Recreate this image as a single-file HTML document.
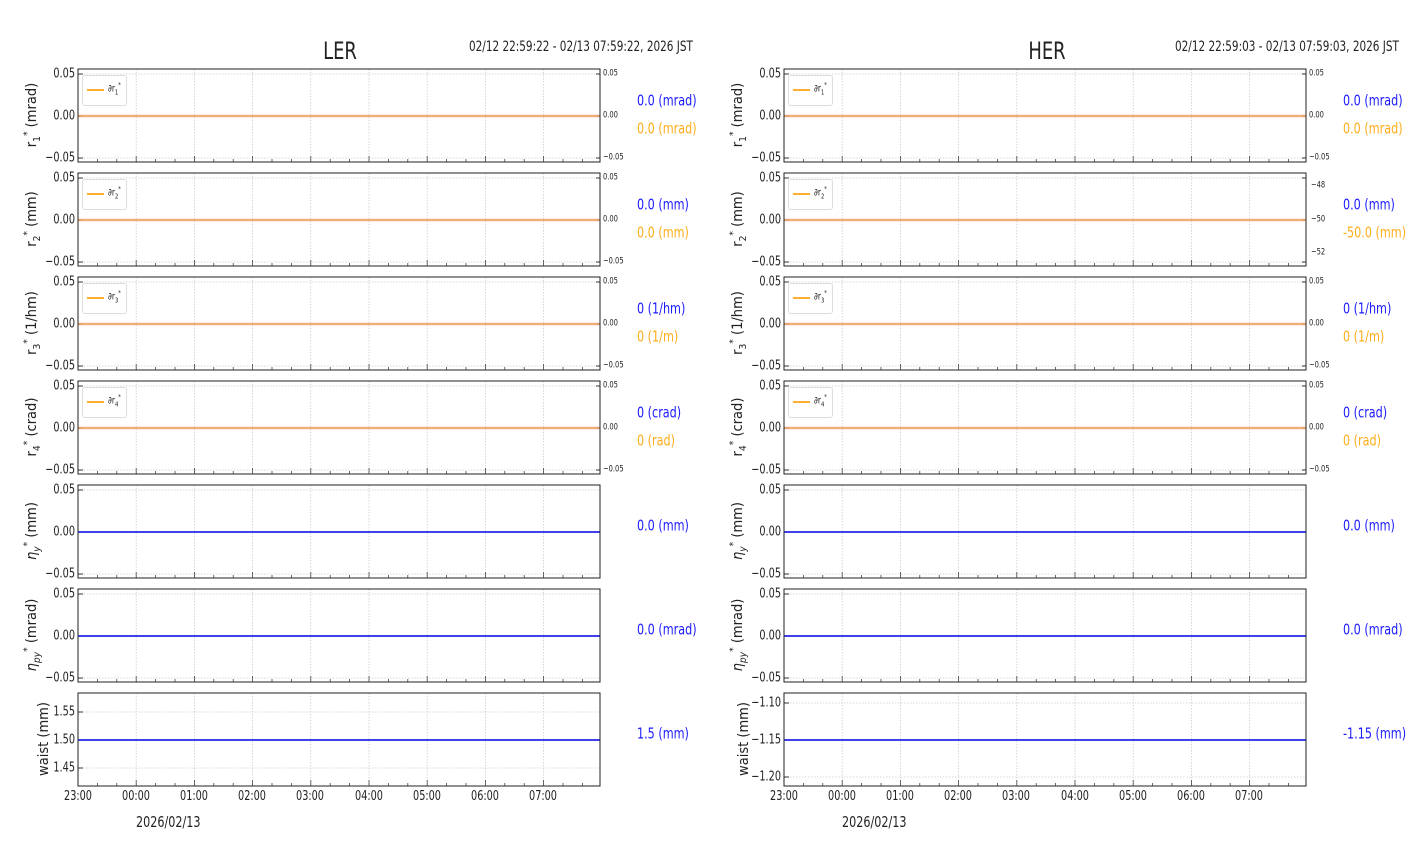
<!DOCTYPE html>
<html><head><meta charset="utf-8"><style>
body{margin:0;background:#fff;width:1412px;height:864px;position:relative;overflow:hidden;font-family:"DejaVu Sans Condensed","DejaVu Sans","Liberation Sans",sans-serif;color:#222}
.t{position:absolute;white-space:nowrap;line-height:1}
.yl{font-size:13px;transform:translate(-100%,-50%) scaleX(.83);transform-origin:100% 50%}
.xl{font-size:13px;transform:translate(-50%,0) scaleX(.83);transform-origin:50% 50%}
.rs{font-size:9px;transform:translate(0,-50%) scaleX(.83);transform-origin:0 50%}
.lab{font-size:14.5px;transform:translate(-50%,-50%) rotate(-90deg)}
.v{font-size:15px;transform:translate(0,-50%) scaleX(.83);transform-origin:0 50%}
.sc{transform:scaleX(.83);transform-origin:0 50%}
.b{color:#1a1aff}.o{color:#ffad1a}
.leg{position:absolute;width:43px;height:29px;border:1px solid #ddd;border-radius:3px;background:#fff}
.leg i{position:absolute;left:4px;top:13px;width:17px;height:2px;background:#ffb030}
.leg span{position:absolute;left:25px;top:5px;font-size:10px;transform:scaleX(.83);transform-origin:0 50%}
sup,sub{font-size:70%}
</style></head><body>
<svg id="g" width="1412" height="864" style="position:absolute;left:0;top:0"></svg>

<div class="t" style="left:340px;top:39px;font-size:24px;transform:translateX(-50%) scaleX(.83)">LER</div>
<div class="t sc" style="left:469px;top:40px;font-size:14px">02/12 22:59:22 - 02/13 07:59:22, 2026 JST</div>
<div class="t" style="left:1047px;top:39px;font-size:24px;transform:translateX(-50%) scaleX(.83)">HER</div>
<div class="t sc" style="left:1175px;top:40px;font-size:14px">02/12 22:59:03 - 02/13 07:59:03, 2026 JST</div>

<div class="t lab" style="left:33px;top:115px">r<sub>1</sub><sup>*</sup> (mrad)</div>
<div class="t lab" style="left:33px;top:219px">r<sub>2</sub><sup>*</sup> (mm)</div>
<div class="t lab" style="left:33px;top:323px">r<sub>3</sub><sup>*</sup> (1/hm)</div>
<div class="t lab" style="left:33px;top:427px">r<sub>4</sub><sup>*</sup> (crad)</div>
<div class="t lab" style="left:33px;top:531px"><i>η</i><sub><i>y</i></sub><sup>*</sup> (mm)</div>
<div class="t lab" style="left:33px;top:635px"><i>η</i><sub><i>py</i></sub><sup>*</sup> (mrad)</div>
<div class="t lab" style="left:44px;top:739px">waist (mm)</div>
<div class="t lab" style="left:739px;top:115px">r<sub>1</sub><sup>*</sup> (mrad)</div>
<div class="t lab" style="left:739px;top:219px">r<sub>2</sub><sup>*</sup> (mm)</div>
<div class="t lab" style="left:739px;top:323px">r<sub>3</sub><sup>*</sup> (1/hm)</div>
<div class="t lab" style="left:739px;top:427px">r<sub>4</sub><sup>*</sup> (crad)</div>
<div class="t lab" style="left:739px;top:531px"><i>η</i><sub><i>y</i></sub><sup>*</sup> (mm)</div>
<div class="t lab" style="left:739px;top:635px"><i>η</i><sub><i>py</i></sub><sup>*</sup> (mrad)</div>
<div class="t lab" style="left:744px;top:739px">waist (mm)</div>

<div class="t yl" style="left:75px;top:74px">0.05</div><div class="t yl" style="left:75px;top:116px">0.00</div><div class="t yl" style="left:75px;top:158px">−0.05</div>
<div class="t yl" style="left:75px;top:178px">0.05</div><div class="t yl" style="left:75px;top:220px">0.00</div><div class="t yl" style="left:75px;top:262px">−0.05</div>
<div class="t yl" style="left:75px;top:282px">0.05</div><div class="t yl" style="left:75px;top:324px">0.00</div><div class="t yl" style="left:75px;top:366px">−0.05</div>
<div class="t yl" style="left:75px;top:386px">0.05</div><div class="t yl" style="left:75px;top:428px">0.00</div><div class="t yl" style="left:75px;top:470px">−0.05</div>
<div class="t yl" style="left:75px;top:490px">0.05</div><div class="t yl" style="left:75px;top:532px">0.00</div><div class="t yl" style="left:75px;top:574px">−0.05</div>
<div class="t yl" style="left:75px;top:594px">0.05</div><div class="t yl" style="left:75px;top:636px">0.00</div><div class="t yl" style="left:75px;top:678px">−0.05</div>
<div class="t yl" style="left:75px;top:712px">1.55</div><div class="t yl" style="left:75px;top:740px">1.50</div><div class="t yl" style="left:75px;top:768px">1.45</div>
<div class="t yl" style="left:781px;top:74px">0.05</div><div class="t yl" style="left:781px;top:116px">0.00</div><div class="t yl" style="left:781px;top:158px">−0.05</div>
<div class="t yl" style="left:781px;top:178px">0.05</div><div class="t yl" style="left:781px;top:220px">0.00</div><div class="t yl" style="left:781px;top:262px">−0.05</div>
<div class="t yl" style="left:781px;top:282px">0.05</div><div class="t yl" style="left:781px;top:324px">0.00</div><div class="t yl" style="left:781px;top:366px">−0.05</div>
<div class="t yl" style="left:781px;top:386px">0.05</div><div class="t yl" style="left:781px;top:428px">0.00</div><div class="t yl" style="left:781px;top:470px">−0.05</div>
<div class="t yl" style="left:781px;top:490px">0.05</div><div class="t yl" style="left:781px;top:532px">0.00</div><div class="t yl" style="left:781px;top:574px">−0.05</div>
<div class="t yl" style="left:781px;top:594px">0.05</div><div class="t yl" style="left:781px;top:636px">0.00</div><div class="t yl" style="left:781px;top:678px">−0.05</div>
<div class="t yl" style="left:781px;top:703px">−1.10</div><div class="t yl" style="left:781px;top:740px">−1.15</div><div class="t yl" style="left:781px;top:777px">−1.20</div>

<div class="t rs" style="left:603px;top:74px">0.05</div><div class="t rs" style="left:603px;top:116px">0.00</div><div class="t rs" style="left:603px;top:158px">−0.05</div>
<div class="t rs" style="left:603px;top:178px">0.05</div><div class="t rs" style="left:603px;top:220px">0.00</div><div class="t rs" style="left:603px;top:262px">−0.05</div>
<div class="t rs" style="left:603px;top:282px">0.05</div><div class="t rs" style="left:603px;top:324px">0.00</div><div class="t rs" style="left:603px;top:366px">−0.05</div>
<div class="t rs" style="left:603px;top:386px">0.05</div><div class="t rs" style="left:603px;top:428px">0.00</div><div class="t rs" style="left:603px;top:470px">−0.05</div>
<div class="t rs" style="left:1309px;top:74px">0.05</div><div class="t rs" style="left:1309px;top:116px">0.00</div><div class="t rs" style="left:1309px;top:158px">−0.05</div>
<div class="t rs" style="left:1311px;top:186px">−48</div><div class="t rs" style="left:1311px;top:220px">−50</div><div class="t rs" style="left:1311px;top:253px">−52</div>
<div class="t rs" style="left:1309px;top:282px">0.05</div><div class="t rs" style="left:1309px;top:324px">0.00</div><div class="t rs" style="left:1309px;top:366px">−0.05</div>
<div class="t rs" style="left:1309px;top:386px">0.05</div><div class="t rs" style="left:1309px;top:428px">0.00</div><div class="t rs" style="left:1309px;top:470px">−0.05</div>

<div class="leg" style="left:82px;top:75px"><i></i><span>∂r<sub>1</sub><sup>*</sup></span></div>
<div class="leg" style="left:82px;top:179px"><i></i><span>∂r<sub>2</sub><sup>*</sup></span></div>
<div class="leg" style="left:82px;top:283px"><i></i><span>∂r<sub>3</sub><sup>*</sup></span></div>
<div class="leg" style="left:82px;top:387px"><i></i><span>∂r<sub>4</sub><sup>*</sup></span></div>
<div class="leg" style="left:788px;top:75px"><i></i><span>∂r<sub>1</sub><sup>*</sup></span></div>
<div class="leg" style="left:788px;top:179px"><i></i><span>∂r<sub>2</sub><sup>*</sup></span></div>
<div class="leg" style="left:788px;top:283px"><i></i><span>∂r<sub>3</sub><sup>*</sup></span></div>
<div class="leg" style="left:788px;top:387px"><i></i><span>∂r<sub>4</sub><sup>*</sup></span></div>

<div class="t v b" style="left:637px;top:101px">0.0 (mrad)</div><div class="t v o" style="left:637px;top:129px">0.0 (mrad)</div>
<div class="t v b" style="left:637px;top:205px">0.0 (mm)</div><div class="t v o" style="left:637px;top:233px">0.0 (mm)</div>
<div class="t v b" style="left:637px;top:309px">0 (1/hm)</div><div class="t v o" style="left:637px;top:337px">0 (1/m)</div>
<div class="t v b" style="left:637px;top:413px">0 (crad)</div><div class="t v o" style="left:637px;top:441px">0 (rad)</div>
<div class="t v b" style="left:637px;top:526px">0.0 (mm)</div>
<div class="t v b" style="left:637px;top:630px">0.0 (mrad)</div>
<div class="t v b" style="left:637px;top:734px">1.5 (mm)</div>
<div class="t v b" style="left:1343px;top:101px">0.0 (mrad)</div><div class="t v o" style="left:1343px;top:129px">0.0 (mrad)</div>
<div class="t v b" style="left:1343px;top:205px">0.0 (mm)</div><div class="t v o" style="left:1343px;top:233px">-50.0 (mm)</div>
<div class="t v b" style="left:1343px;top:309px">0 (1/hm)</div><div class="t v o" style="left:1343px;top:337px">0 (1/m)</div>
<div class="t v b" style="left:1343px;top:413px">0 (crad)</div><div class="t v o" style="left:1343px;top:441px">0 (rad)</div>
<div class="t v b" style="left:1343px;top:526px">0.0 (mm)</div>
<div class="t v b" style="left:1343px;top:630px">0.0 (mrad)</div>
<div class="t v b" style="left:1343px;top:734px">-1.15 (mm)</div>

<div class="t xl" style="left:78px;top:790px">23:00</div><div class="t xl" style="left:136px;top:790px">00:00</div><div class="t xl" style="left:194px;top:790px">01:00</div><div class="t xl" style="left:252px;top:790px">02:00</div><div class="t xl" style="left:310px;top:790px">03:00</div><div class="t xl" style="left:369px;top:790px">04:00</div><div class="t xl" style="left:427px;top:790px">05:00</div><div class="t xl" style="left:485px;top:790px">06:00</div><div class="t xl" style="left:543px;top:790px">07:00</div>
<div class="t xl" style="left:784px;top:790px">23:00</div><div class="t xl" style="left:842px;top:790px">00:00</div><div class="t xl" style="left:900px;top:790px">01:00</div><div class="t xl" style="left:958px;top:790px">02:00</div><div class="t xl" style="left:1016px;top:790px">03:00</div><div class="t xl" style="left:1075px;top:790px">04:00</div><div class="t xl" style="left:1133px;top:790px">05:00</div><div class="t xl" style="left:1191px;top:790px">06:00</div><div class="t xl" style="left:1249px;top:790px">07:00</div>
<div class="t sc" style="left:136px;top:815px;font-size:15px">2026/02/13</div>
<div class="t sc" style="left:842px;top:815px;font-size:15px">2026/02/13</div>

<script>
var s='',T=[69,173,277,381,485,589,693];
function L(a,b,c,d,st){s+='<line x1="'+a+'" y1="'+b+'" x2="'+c+'" y2="'+d+'" '+st+'/>';}
[78,784].forEach(function(X){
 var R=X+522;
 T.forEach(function(t,i){
  var B=t+93, ys=i<6?[t+5,t+47,t+89]:(X==78?[t+19,t+47,t+75]:[t+10,t+47,t+84]);
  for(var k=0;k<9;k++){var x=X+k*58.2;L(x,t,x,B,'stroke="#ccc" stroke-dasharray="1.5,1.5" stroke-width="0.8"');}
  ys.forEach(function(y){L(X,y,R,y,'stroke="#ccc" stroke-dasharray="1.5,1.5" stroke-width="0.8"');L(X,y,X+5,y,'stroke="#333"');if(i<4)L(R-4,y,R,y,'stroke="#333"');});
  for(var m=0;m<27;m++){var x=X+m*19.4;var mj=m%3==0;L(x,B,x,B-(mj?6:3),'stroke="#444" stroke-width="0.8"');}
  if(i<4){L(X,t+47,R,t+47,'stroke="#d98a8a" stroke-width="2.5" opacity="0.6"');L(X,t+47,R,t+47,'stroke="#ffa500" stroke-width="0.8"');}
  else L(X,t+47,R,t+47,'stroke="#0000e0" stroke-width="1.6"');
  s+='<rect x="'+X+'" y="'+t+'" width="522" height="93" fill="none" stroke="#222" stroke-width="1"/>';
 });
});
document.getElementById('g').innerHTML=s;
</script>
</body></html>
